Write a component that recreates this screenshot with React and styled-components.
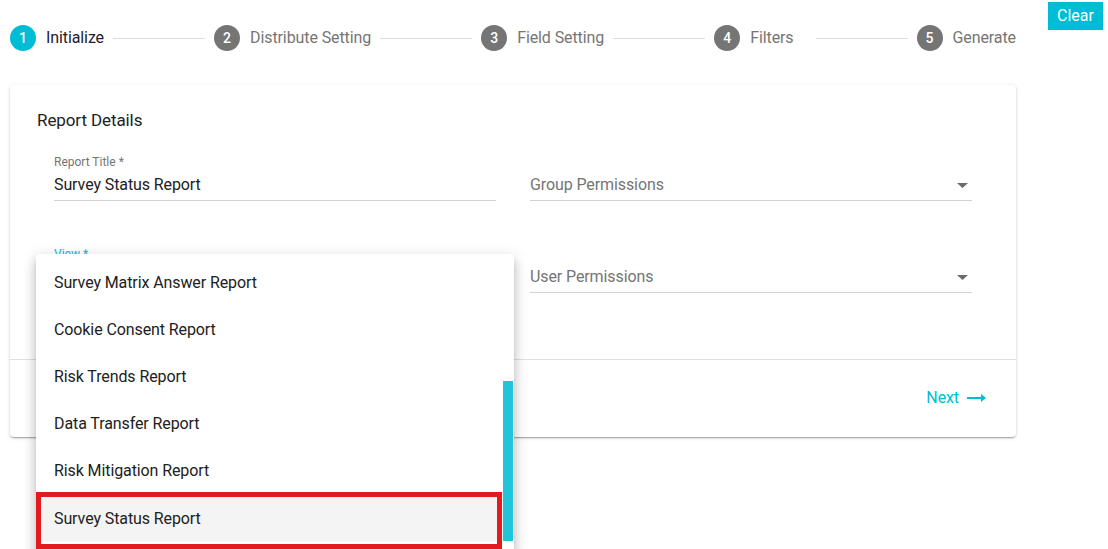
import React from 'react';
import styled, { createGlobalStyle } from 'styled-components';

const GlobalStyle = createGlobalStyle`
  html, body {
    margin: 0;
    padding: 0;
    background: #fff;
    overflow: hidden;
  }
  body {
    font-family: Roboto, "Liberation Sans", Arial, sans-serif;
    color: #212121;
    letter-spacing: -0.1px;
  }
  * {
    box-sizing: border-box;
  }
`;

const Page = styled.div`
  display: flex;
  align-items: flex-start;
  gap: 32px;
  padding-left: 10px;
  height: 549px;
`;

const Main = styled.div`
  width: 1006px;
  flex-shrink: 0;
`;

const Stepper = styled.div`
  display: flex;
  align-items: center;
  height: 26px;
  margin: 25px 0 34px;
`;

const StepIcon = styled.span`
  width: 26px;
  height: 26px;
  border-radius: 50%;
  flex-shrink: 0;
  display: flex;
  align-items: center;
  justify-content: center;
  background: ${p => (p.$active ? '#00bcd4' : '#757575')};
  color: #fff;
  font-size: 14px;
  font-weight: 500;
  letter-spacing: 0;
`;

const StepLabel = styled.span`
  margin-left: 10px;
  padding-right: ${p => p.$pad || 0}px;
  padding-bottom: 2px;
  font-size: 16px;
  white-space: nowrap;
  color: ${p => (p.$active ? '#1e2130' : '#757575')};
`;

const Connector = styled.span`
  flex: 1;
  height: 1px;
  margin: 0 9px;
  background: #dedede;
`;

const ClearButton = styled.button`
  margin-top: 2px;
  height: 28px;
  padding: 0 9px 2px;
  border: none;
  border-radius: 0;
  background: #00bcd4;
  color: #fff;
  font-family: inherit;
  font-size: 16px;
  cursor: pointer;
`;

const Card = styled.div`
  position: relative;
  background: #fff;
  border-radius: 4px;
  box-shadow: 0 2px 1px -1px rgba(0, 0, 0, 0.2), 0 1px 2px 0 rgba(0, 0, 0, 0.14),
    0 1px 4px 0 rgba(0, 0, 0, 0.12);
`;

const CardBody = styled.div`
  padding: 22px 44px 66px 27px;
`;

const CardTitle = styled.div`
  font-size: 17px;
  line-height: 26px;
  color: #212121;
`;

const FieldGrid = styled.div`
  display: grid;
  grid-template-columns: 1fr 1fr;
  column-gap: 34px;
  row-gap: 45px;
  margin: 21px 0 0 17px;
`;

const Field = styled.div`
  position: relative;
`;

const FieldLabel = styled.label`
  display: block;
  height: 16px;
  font-size: 12px;
  line-height: 16px;
  letter-spacing: 0;
  color: ${p => (p.$focused ? '#00bcd4' : '#757575')};
`;

const FieldInput = styled.div`
  margin-top: 2px;
  height: 29px;
  padding-top: 1px;
  padding-bottom: 3px;
  display: flex;
  align-items: center;
  justify-content: space-between;
  font-size: 16px;
  line-height: 24px;
  color: ${p => (p.$placeholder ? '#757575' : '#212121')};
  border-bottom: 1px solid ${p => (p.$focused ? '#00bcd4' : '#d2d2d2')};
`;

const DropArrow = styled.svg`
  width: 11px;
  height: 5px;
  margin-right: 4px;
  fill: #6b6b6b;
`;

const Menu = styled.div`
  position: absolute;
  z-index: 10;
  top: 8px;
  left: -18px;
  width: 478px;
  height: 320px;
  overflow: hidden;
  padding-top: 4.5px;
  background: #fff;
  border-radius: 4px;
  box-shadow: 0 5px 5px -3px rgba(0, 0, 0, 0.2), 0 8px 10px 1px rgba(0, 0, 0, 0.14),
    0 3px 14px 2px rgba(0, 0, 0, 0.12);
`;

const MenuItem = styled.div`
  position: relative;
  width: calc(100% - 12px);
  height: 47.2px;
  padding-left: 18px;
  display: flex;
  align-items: center;
  font-size: 16px;
  color: #212121;
  background: ${p => (p.$selected ? '#f4f4f4' : 'transparent')};

  &::after {
    content: '';
    display: ${p => (p.$selected ? 'block' : 'none')};
    position: absolute;
    top: -2.5px;
    bottom: -7.5px;
    left: 0;
    right: 0;
    border: 5px solid #e21b1f;
  }
`;

const ScrollThumb = styled.div`
  position: absolute;
  top: 127px;
  right: 1px;
  width: 10px;
  height: 160px;
  background: #21c4d8;
`;

const Actions = styled.div`
  height: 78px;
  display: flex;
  align-items: center;
  justify-content: flex-end;
  padding-right: 30px;
  border-top: 1px solid #e0e0e0;
`;

const NextButton = styled.button`
  display: flex;
  align-items: center;
  gap: 8px;
  padding: 0 0 2px;
  border: none;
  background: none;
  color: #00bcd4;
  font-family: inherit;
  font-size: 16px;
  letter-spacing: -0.1px;
  cursor: pointer;
`;

const steps = [
  { label: 'Initialize' },
  { label: 'Distribute Setting' },
  { label: 'Field Setting' },
  { label: 'Filters', pad: 13 },
  { label: 'Generate' },
];

const viewOptions = [
  'Survey Matrix Answer Report',
  'Cookie Consent Report',
  'Risk Trends Report',
  'Data Transfer Report',
  'Risk Mitigation Report',
  'Survey Status Report',
];

const Arrow = () => (
  <DropArrow viewBox="0 0 11 5">
    <path d="M0 0h11L5.5 5z" />
  </DropArrow>
);

const App = () => {
  const active = 0;
  const selectedView = 'Survey Status Report';

  return (
    <>
      <GlobalStyle />
      <Page>
        <Main>
          <Stepper>
            {steps.map((s, i) => (
              <React.Fragment key={s.label}>
                {i > 0 && <Connector />}
                <StepIcon $active={i === active}>{i + 1}</StepIcon>
                <StepLabel $active={i === active} $pad={s.pad}>
                  {s.label}
                </StepLabel>
              </React.Fragment>
            ))}
          </Stepper>

          <Card>
            <CardBody>
              <CardTitle>Report Details</CardTitle>
              <FieldGrid>
                <Field>
                  <FieldLabel>Report Title *</FieldLabel>
                  <FieldInput>Survey Status Report</FieldInput>
                </Field>
                <Field>
                  <FieldLabel />
                  <FieldInput $placeholder>
                    Group Permissions
                    <Arrow />
                  </FieldInput>
                </Field>
                <Field>
                  {/* the open list covers the select's own value */}
                  <FieldLabel $focused>View *</FieldLabel>
                  <FieldInput $focused />
                  <Menu>
                    {viewOptions.map(opt => (
                      <MenuItem key={opt} $selected={opt === selectedView}>
                        {opt}
                      </MenuItem>
                    ))}
                    <ScrollThumb />
                  </Menu>
                </Field>
                <Field>
                  <FieldLabel />
                  <FieldInput $placeholder>
                    User Permissions
                    <Arrow />
                  </FieldInput>
                </Field>
              </FieldGrid>
            </CardBody>
            <Actions>
              <NextButton>
                Next
                <svg width="19" height="8" viewBox="0 0 19 8" fill="#00bcd4">
                  <path d="M0 3h14V0l5 4-5 4V5H0z" />
                </svg>
              </NextButton>
            </Actions>
          </Card>
        </Main>
        <ClearButton>Clear</ClearButton>
      </Page>
    </>
  );
};

export default App;
